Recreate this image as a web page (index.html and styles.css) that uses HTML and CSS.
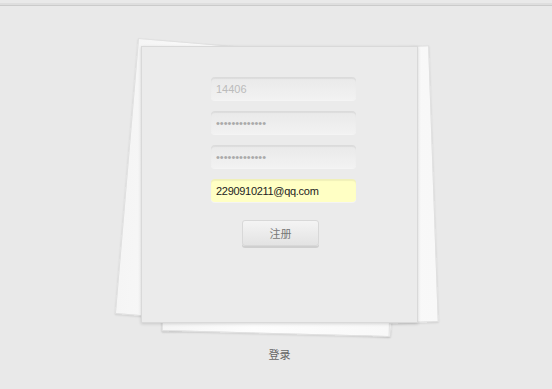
FILE: index.html
```html
<!DOCTYPE html>
<html>
	<head>
		<meta charset="utf-8">
		<title>注册</title>
		<link rel="stylesheet" href="styles.css">
	</head>
	<body>

	<div id="topbar"></div>

	<section id="outer">
		<div id="stack">
			<div class="paper" id="paperLeft"></div>
			<div class="paper" id="paperRight"></div>
			<div class="paper" id="paperBottom"></div>
			<form id="card">
				<input type="text" class="field" placeholder="14406">
				<input type="password" class="field" value="1234567890123">
				<input type="password" class="field" value="1234567890123">
				<input type="text" class="field filled" value="2290910211@qq.com">
				<button type="button" class="btn">注册</button>
			</form>
		</div>
		<a href="#" id="login">登录</a>
	</section>

	</body>
</html>
```

FILE: styles.css
```css
* {
	margin: 0;
	padding: 0;
}
body {
	background: #e9e9e9;
	font-family: "Liberation Sans", "Noto Sans CJK SC", sans-serif;
	font-size: 12px;
}
#topbar {
	margin-top: 3px;
	height: 2px;
	background: #dedede;
	border-bottom: 1px solid #cbcbcb;
}
#outer {
	width: 277px;
	margin: 0 auto;
	padding-left: 7px;
	text-align: center;
}
#stack {
	position: relative;
	width: 277px;
	height: 277px;
	margin-top: 40px;
}
.paper {
	position: absolute;
	background: linear-gradient(to right, #f5f5f5, #fdfdfd 40%, #f8f8f8);
	border: 1px solid #e0e0e0;
	box-shadow: 0 1px 2px rgba(0, 0, 0, 0.1);
	box-sizing: border-box;
}
#paperLeft {
	left: -15px;
	top: 3px;
	width: 277px;
	height: 277px;
	transform: rotate(4.8deg);
}
#paperRight {
	left: 16px;
	top: 4px;
	width: 277px;
	height: 277px;
	transform: rotate(-2deg);
}
#paperBottom {
	left: 24px;
	top: 28px;
	width: 228px;
	height: 260px;
	transform: rotate(1.5deg);
}
#card {
	position: relative;
	box-sizing: border-box;
	width: 277px;
	height: 277px;
	padding: 30px 0 0 69px;
	background: #ebebeb;
	border: 1px solid #d9d9d9;
	box-shadow: 0 1px 3px rgba(0, 0, 0, 0.15);
	text-align: left;
}
.field {
	display: block;
	box-sizing: border-box;
	width: 145px;
	height: 23px;
	margin-bottom: 11px;
	padding: 0 0 0 5px;
	border: none;
	border-radius: 4px;
	background: linear-gradient(#e9e9e9, #f2f2f2);
	box-shadow: inset 0 2px 1px rgba(0, 0, 0, 0.06), 0 1px 0 #f4f4f4;
	font-family: "Liberation Sans", sans-serif;
	font-size: 11px;
	color: #aaa;
	outline: none;
}
.field::placeholder {
	color: #bbb;
}
.filled {
	background: #ffffc4;
	color: #222;
	letter-spacing: -0.3px;
}
.btn {
	display: block;
	width: 77px;
	height: 26px;
	margin: 18px 0 0 31px;
	padding-bottom: 1px;
	border: 1px solid #d8d8d8;
	border-radius: 3px;
	background: linear-gradient(#f4f4f4, #e3e3e3);
	box-shadow: 0 2px 0 #cfcfcf;
	font-family: "Noto Sans CJK SC", sans-serif;
	font-size: 11px;
	color: #777;
}
#login {
	display: inline-block;
	margin-top: 23px;
	font-family: "Noto Sans CJK SC", sans-serif;
	font-size: 11px;
	color: #666;
	text-decoration: none;
}
```
